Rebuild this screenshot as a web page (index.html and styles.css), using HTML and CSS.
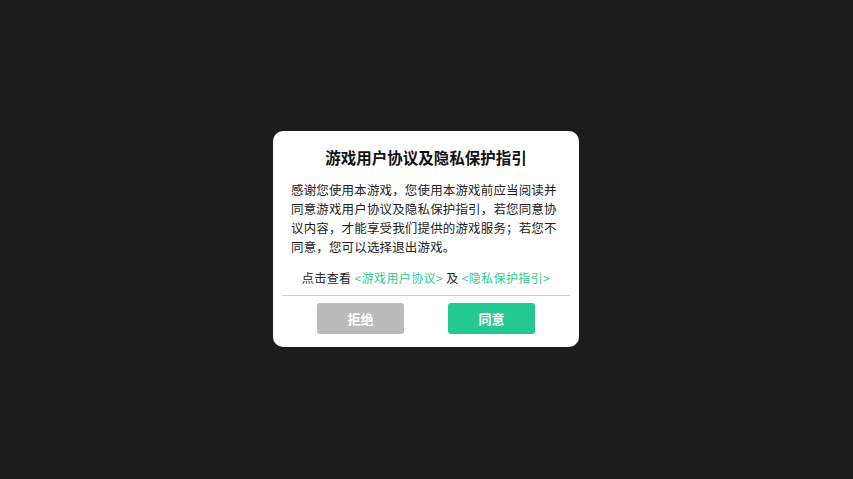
FILE: index.html
```html
<!DOCTYPE html>
<html lang="zh">
<head>
<meta charset="utf-8">
<link rel="stylesheet" href="styles.css">
</head>
<body>
<div class="screen">
  <div class="dialog">
    <div class="title">游戏用户协议及隐私保护指引</div>
    <div class="body">感谢您使用本游戏，您使用本游戏前应当阅读并同意游戏用户协议及隐私保护指引，若您同意协议内容，才能享受我们提供的游戏服务；若您不同意，您可以选择退出游戏。</div>
    <div class="links">点击查看 <span class="link">&lt;游戏用户协议&gt;</span> 及 <span class="link">&lt;隐私保护指引&gt;</span></div>
    <div class="divider"></div>
    <div class="buttons">
      <div class="btn refuse">拒绝</div>
      <div class="btn agree">同意</div>
    </div>
  </div>
</div>
</body>
</html>
```
FILE: styles.css
```css
html, body {
  margin: 0;
  padding: 0;
  background: #1c1c1c;
}
body {
  font-family: "Noto Sans CJK SC", "Noto Sans", sans-serif;
}
.screen {
  width: 853px;
  height: 479px;
  box-sizing: border-box;
  padding-right: 1px;
  padding-bottom: 1px;
  display: flex;
  align-items: center;
  justify-content: center;
}
.dialog {
  width: 306px;
  height: 216px;
  box-sizing: border-box;
  background: #ffffff;
  border-radius: 10px;
  display: flex;
  flex-direction: column;
  padding-top: 15px;
}
.title {
  font-size: 15.5px;
  font-weight: bold;
  color: #111;
  text-align: center;
  line-height: 22px;
}
.body {
  margin: 12px 14px 0 18px;
  font-size: 12.5px;
  letter-spacing: 0.15px;
  line-height: 19px;
  color: #222;
}
.links {
  margin-top: 13px;
  text-align: center;
  font-size: 12px;
  letter-spacing: 0.4px;
  line-height: 18px;
  color: #222;
}
.link {
  color: #2fcf91;
}
.divider {
  margin: 8px 9px 0 9px;
  height: 1px;
  background: #cfcfcf;
}
.buttons {
  display: flex;
  justify-content: center;
  gap: 44px;
  margin-top: 7px;
}
.btn {
  width: 87px;
  height: 31px;
  border-radius: 3px;
  color: #fff;
  font-size: 13px;
  font-weight: bold;
  display: flex;
  align-items: center;
  justify-content: center;
}
.refuse {
  background: #bbbbbb;
}
.agree {
  background: #24c991;
}
```
